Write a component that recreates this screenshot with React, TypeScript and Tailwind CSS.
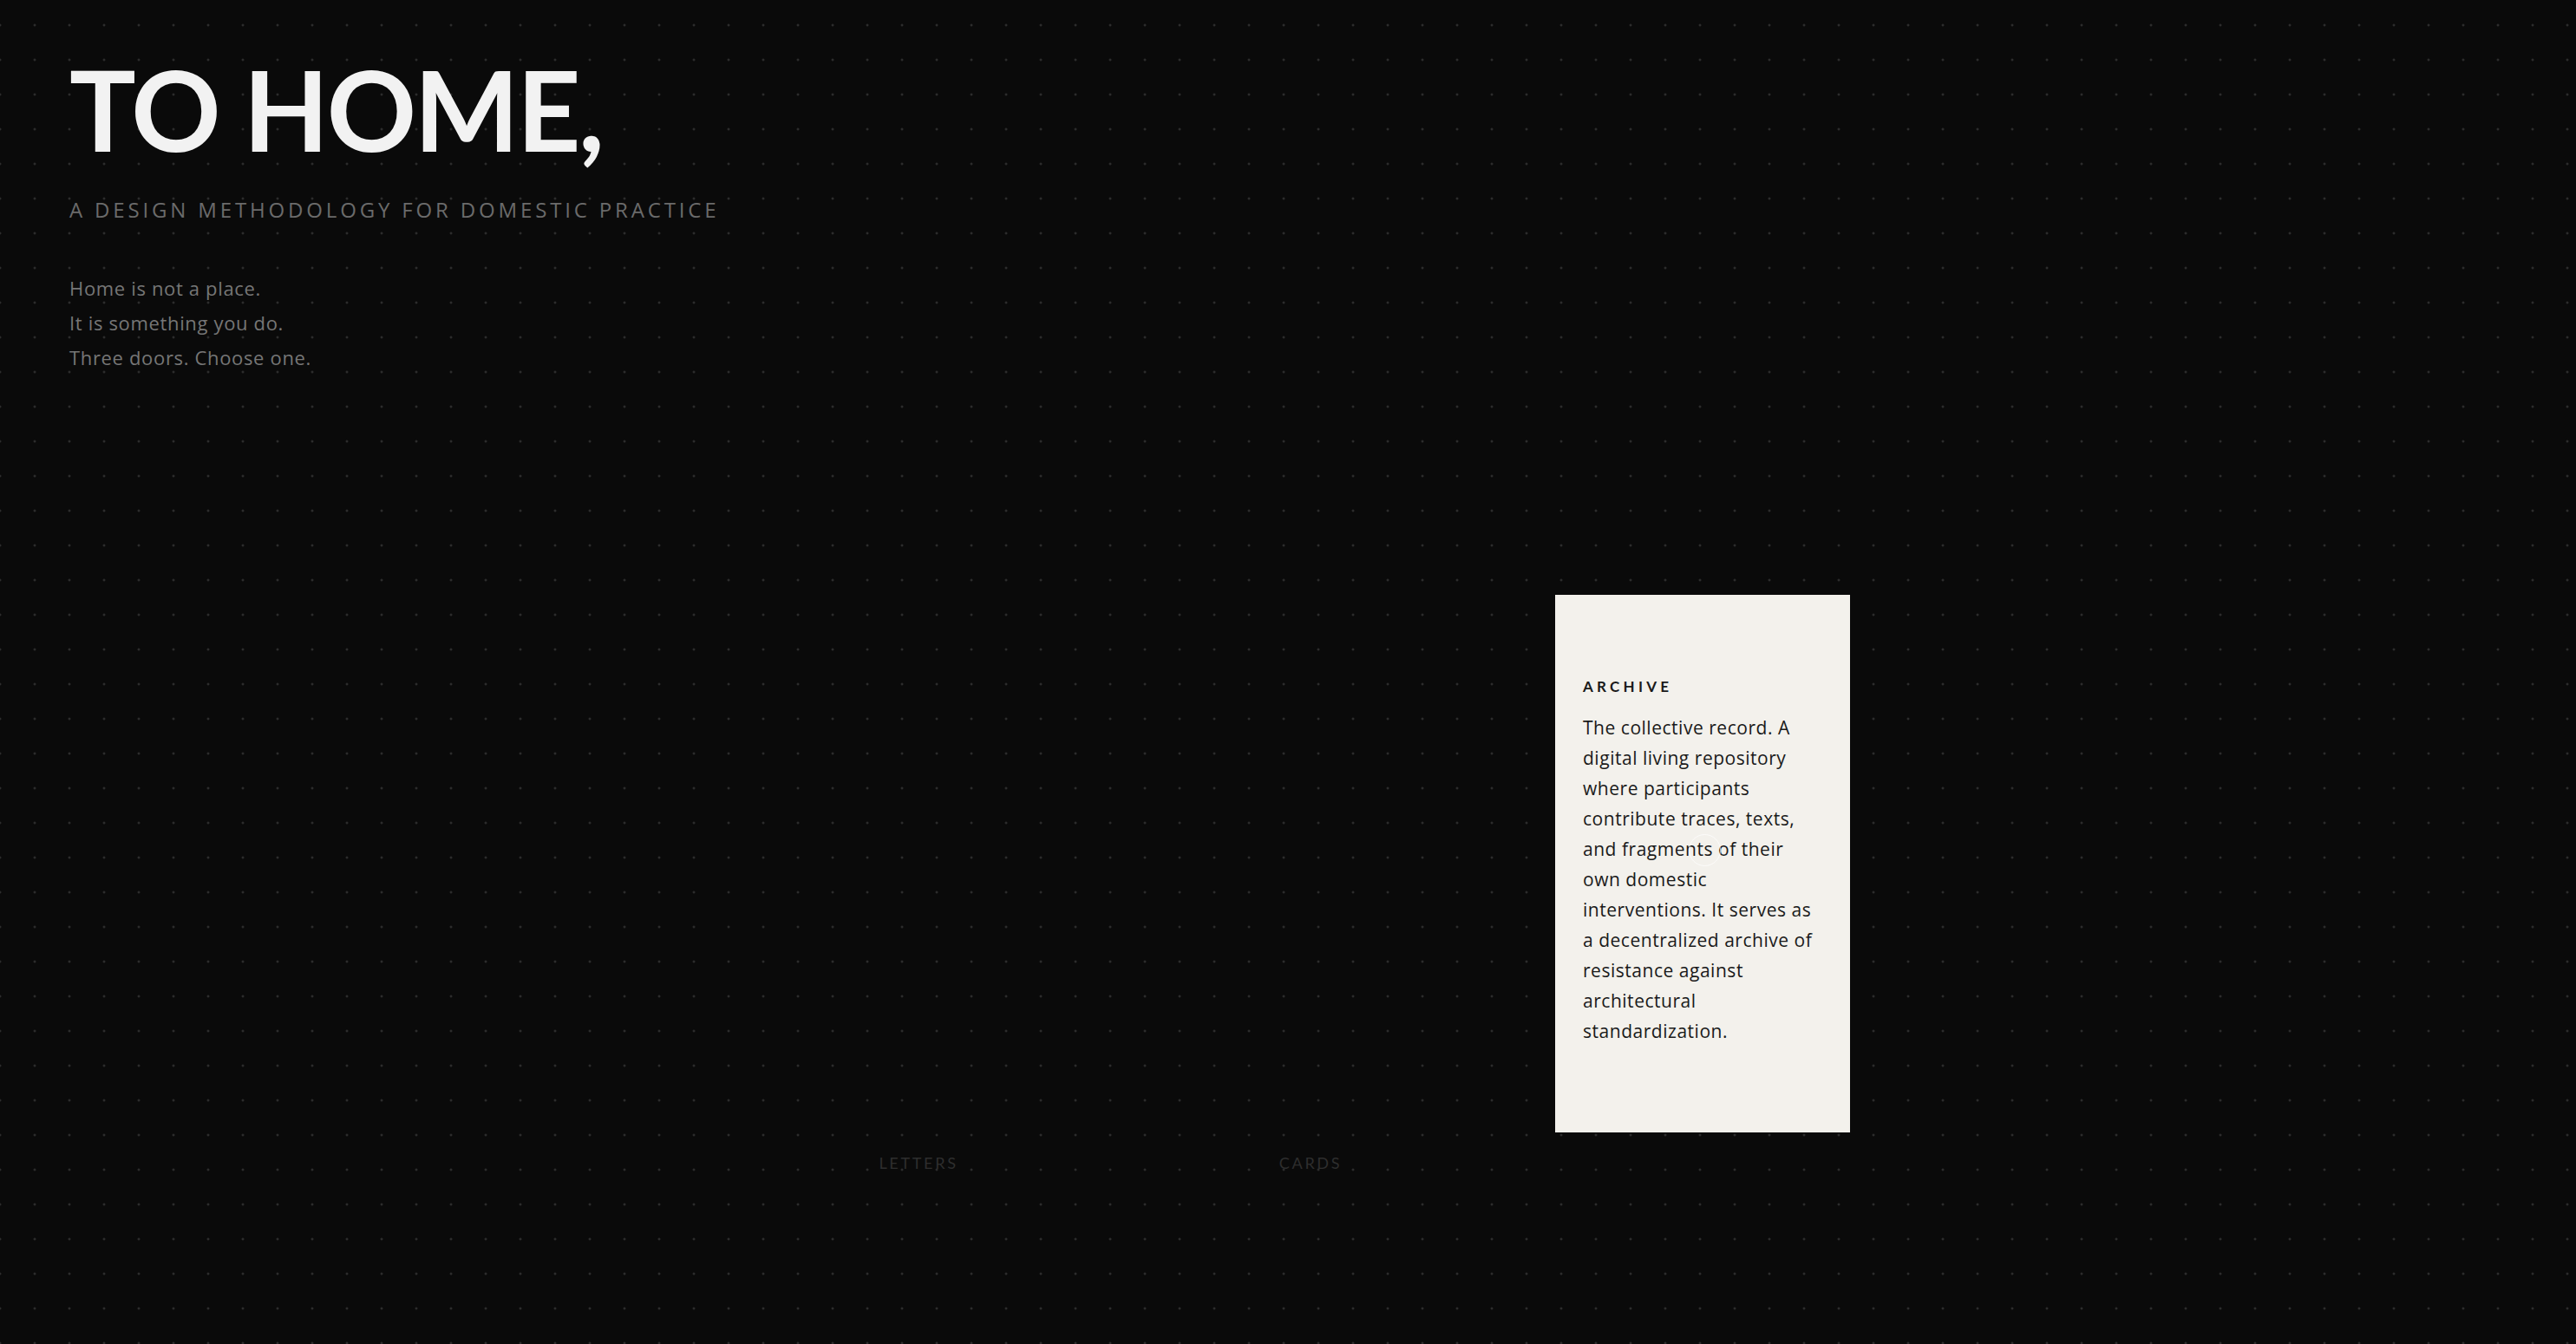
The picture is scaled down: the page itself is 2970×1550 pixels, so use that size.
const doors = [
  { key: "letters", label: "Letters", open: false },
  { key: "cards", label: "Cards", open: false },
  { key: "archive", label: "Archive", open: true },
];

const archiveLines = [
  "The collective record. A",
  "digital living repository",
  "where participants",
  "contribute traces, texts,",
  "and fragments of their",
  "own domestic",
  "interventions. It serves as",
  "a decentralized archive of",
  "resistance against",
  "architectural",
  "standardization.",
];

function ArchiveCard() {
  return (
    <div className="relative h-full w-full bg-[#f3f1ec] px-[32px] pt-[94px] text-[#1a1a1a]">
      <h3 className="font-['Lato',sans-serif] text-[17px] font-bold uppercase leading-[24px] tracking-[0.25em]">
        Archive
      </h3>
      <p className="mt-[18px] font-['Open_Sans',sans-serif] text-[21px] leading-[35px] tracking-[0.025em]">
        {archiveLines.map((line) => (
          <span key={line} className="block">
            {line}
          </span>
        ))}
      </p>
    </div>
  );
}

export default function App() {
  return (
    <div className="relative h-[1550px] w-full overflow-hidden bg-[#0a0a0a] bg-[radial-gradient(circle,#2c2c2c_1.1px,transparent_1.8px)] bg-[length:40px_40px] bg-[position:20px_9px] px-[80px] pt-[62px] font-['Lato','Noto_Sans',sans-serif]">
      <header>
        <h1 className="text-[128px] font-bold leading-none tracking-[-0.02em] text-[#f2f2f2]">TO HOME,</h1>
        <p className="mt-[40px] font-['Open_Sans',sans-serif] text-[24px] uppercase leading-none tracking-[0.16em] text-[#6b6b6b]">
          A design methodology for domestic practice
        </p>
        <div className="mt-[58px] font-['Open_Sans',sans-serif] text-[22px] leading-[40px] tracking-[0.03em] text-[#767676]">
          <p>Home is not a place.</p>
          <p>It is something you do.</p>
          <p>Three doors. Choose one.</p>
        </div>
      </header>

      <div className="ml-[809px] mt-[254px] flex gap-[112px]">
        {doors.map((door) => (
          <div key={door.key} className="flex w-[340px] flex-col items-center">
            <div className="h-[620px] w-full">{door.open && <ArchiveCard />}</div>
            <span
              className={`mt-[26px] text-[18px] uppercase leading-none tracking-[0.15em] text-[#2e2e2e] ${
                door.open ? "invisible" : ""
              }`}
            >
              {door.label}
            </span>
          </div>
        ))}
      </div>

      {/* cursor ring */}
      <div className="pointer-events-none absolute left-[1947px] top-[962px] h-[37px] w-[37px] rounded-full border border-white/70" />
    </div>
  );
}
